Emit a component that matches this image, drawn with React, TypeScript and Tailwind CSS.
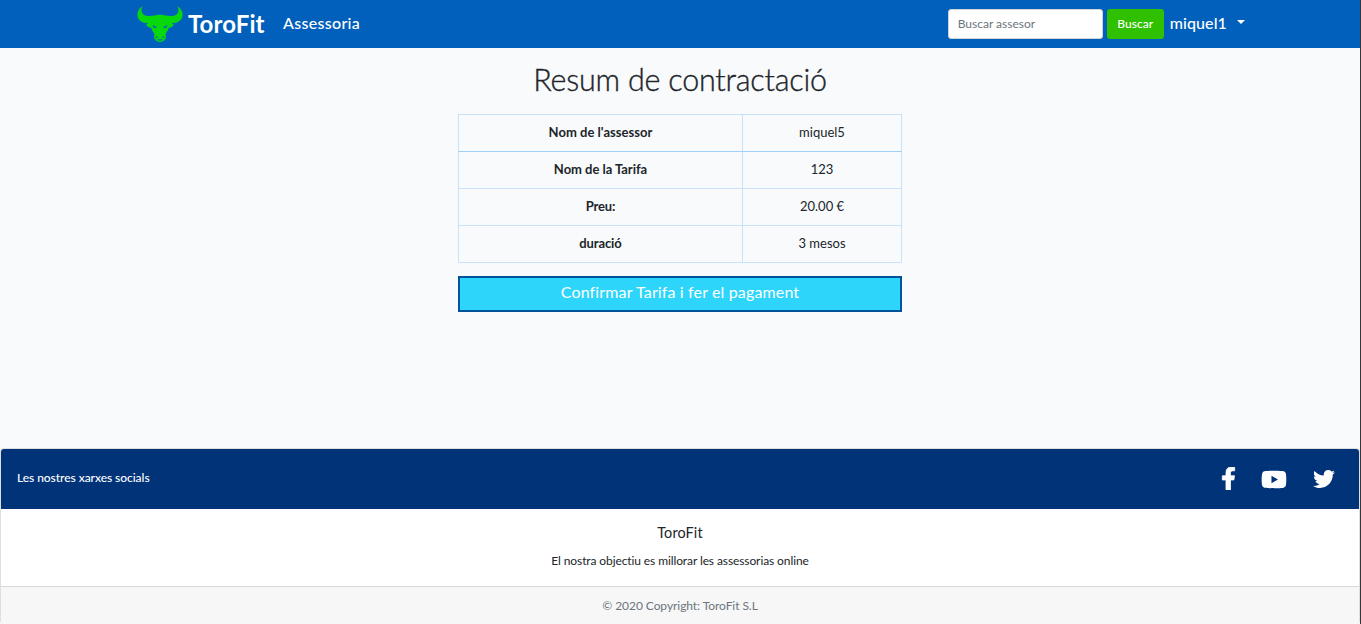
import React from "react";
import { FaFacebookF, FaYoutube, FaTwitter } from "react-icons/fa";

const rows = [
  { label: "Nom de l'assessor", value: "miquel5", labelClass: "tracking-[0.03px]", edge: "border-b-[#a0d0f8]" },
  { label: "Nom de la Tarifa", value: "123", labelClass: "tracking-[-0.03px]", edge: "border-t-[#a0d0f8]" },
  { label: "Preu:", value: "20.00 €", labelClass: "tracking-[-0.1px]", edge: "" },
  { label: "duració", value: "3 mesos", labelClass: "tracking-[-0.1px]", edge: "" },
];

function BullLogo() {
  return (
    <svg width="46" height="36" viewBox="0 0 46 36" fill="#06d80c" aria-hidden="true">
      <path d="M5.500 0C1.500 3 0 6.500 .5 10C1.400 14.800 5.500 17.300 11.500 17.200L9 18.800C10.500 20.800 12 21.800 14.300 21.900C15 24.800 16.800 26 17.500 28.200L17 31C17 32.500 17.600 33 18.300 33.300C19 35.200 20.800 36 23 36C25.200 36 27 35.200 27.700 33.300C28.400 33 29 32.500 29 31L28.500 28.200C29.200 26 31 24.800 31.700 21.900C34 21.800 35.500 20.800 37 18.800L34.500 17.200C40.500 17.300 44.600 14.800 45.500 10C46 6.500 44.500 3 40.500 0C42.600 4.500 41.500 8.500 37 9.700C32 11 28.500 8.800 23 8.800C17.500 8.800 14 11 9 9.700C4.500 8.500 3.400 4.500 5.500 0Z" />
      <path d="M15.600 19L19.800 21L18.800 22.300L16.300 21.400ZM30.400 19L26.200 21L27.200 22.300L29.700 21.400ZM18.800 30L21 31.200L19.400 32.200ZM27.200 30L25 31.200L26.600 32.200ZM20.300 33.300H25.700L24.500 34.400H21.500Z" fill="#0060bc" />
    </svg>
  );
}

export default function App() {
  return (
    <div className="flex h-[624px] w-full flex-col overflow-hidden border-r border-[#343638] bg-[#f8fafc] font-['Lato','Open_Sans',sans-serif] text-[#212529] [font-variant-ligatures:none]">
      <nav className="flex h-12 shrink-0 items-center bg-[#0060bc] pr-[115px] pl-[137px] text-white">
        <a className="flex w-[128px] items-center gap-[5px]">
          <BullLogo />
          <span className="text-[24px] leading-none font-bold tracking-[0.1px]">ToroFit</span>
        </a>
        <a className="ml-[18px] pb-[2px] text-base font-medium tracking-[0.3px]">Assessoria</a>
        <form className="ml-auto flex items-center gap-1">
          <input
            className="h-[30px] w-[155px] rounded-[3px] border border-[#ced4da] bg-white px-[9px] pb-[2px] text-[12px] placeholder:text-[#6c757d] placeholder:opacity-100"
            placeholder="Buscar assesor"
          />
          <button type="button" className="h-[30px] w-[57px] rounded-[3px] bg-[#2fc000] text-[12px] font-medium">
            Buscar
          </button>
        </form>
        <a className="ml-[6px] flex items-center pb-[2px] text-base font-medium tracking-[0.1px]">
          miquel1
          <span className="mb-[3px] ml-[10px] border-x-[4.500px] border-t-[4.500px] border-x-transparent border-t-white" />
        </a>
      </nav>

      <main className="mx-auto w-[444px] flex-1 pt-[13px]">
        <h1 className="text-center text-[30.500px] leading-9 font-light tracking-[-0.22px] whitespace-nowrap [-webkit-text-stroke:0.35px_#212529]">
          Resum de contractació
        </h1>
        <table className="mt-[17px] h-[149px] w-full table-fixed border-collapse text-center text-[13px]">
          <colgroup>
            <col className="w-[284px]" />
            <col />
          </colgroup>
          <tbody>
            {rows.map((row) => (
              <tr key={row.label} className="h-[37px]">
                <th className={`border border-[#c8e2fb] p-0 font-bold ${row.edge}`}>
                  <span className={row.labelClass}>{row.label}</span>
                </th>
                <td className={`border border-[#c8e2fb] p-0 ${row.edge}`}>{row.value}</td>
              </tr>
            ))}
          </tbody>
        </table>
        <button type="button" className="mt-[13px] block h-9 w-full border-2 border-[#00529b] bg-[#2dd5fb] pb-[4px] text-base leading-none tracking-[0.14px] text-white">
          Confirmar Tarifa i fer el pagament
        </button>
      </main>

      <footer className="flex h-[176px] shrink-0 flex-col overflow-hidden rounded-[4px] border border-b-0 border-[#dfdfdf] bg-white text-center">
        <div className="flex h-[60px] items-center justify-between bg-[#003378] pr-[24px] pl-4 text-white">
          <span className="pb-[2px] text-[12px] font-medium tracking-[-0.05px]">Les nostres xarxes socials</span>
          <div className="flex items-center">
            <FaFacebookF className="mr-[25px] mb-[2px] h-[23px] w-[15px] stroke-white stroke-[18]" />
            <FaYoutube className="mr-[26px] h-[25px] w-[26px]" />
            <FaTwitter className="h-[22px] w-[22px]" />
          </div>
        </div>
        <div className="flex h-[77px] flex-col items-center pt-[15px]">
          <h2 className="text-[14.400px] leading-[18px] tracking-[0.15px]">ToroFit</h2>
          <p className="mt-[10px] text-[12px] leading-[18px] tracking-[-0.1px]">El nostra objectiu es millorar les assessorias online</p>
        </div>
        <div className="flex-1 border-t border-[#d8d8d8] bg-[#f7f7f7] pt-[10px] text-[12px] leading-[18px] tracking-[-0.06px] text-[#6c757d]">
          © 2020 Copyright: ToroFit S.L
        </div>
      </footer>
    </div>
  );
}
